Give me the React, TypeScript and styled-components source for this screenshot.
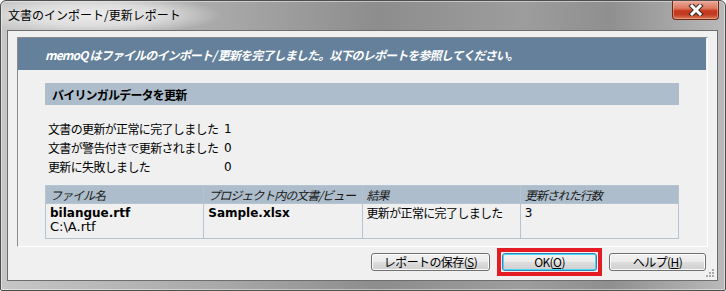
import {FC, Fragment} from 'react';
import styled, {createGlobalStyle} from 'styled-components';

const GlobalStyle = createGlobalStyle`
  html, body {
    margin: 0;
    padding: 0;
    background: #ffffff;
  }
  body {
    font-family: "Noto Sans CJK JP", sans-serif;
    font-size: 12px;
    color: #000;
  }
`;

const JP = `"Noto Sans CJK JP", sans-serif`;
const LATIN = `"DejaVu Sans", "Noto Sans CJK JP", sans-serif`;

const stats = [
  {label: '文書の更新が正常に完了しました', value: '1'},
  {label: '文書が警告付きで更新されました', value: '0'},
  {label: '更新に失敗しました', value: '0'},
];

const columns = ['ファイル名', 'プロジェクト内の文書/ビュー', '結果', '更新された行数'];

const Window = styled.div`
  width: 726px;
  height: 291px;
  box-sizing: border-box;
  border: 1px solid #4e4e4e;
  border-radius: 6px 6px 2px 2px;
  background: linear-gradient(90deg, #c6c6c6 0%, #a9a9a9 30%, #8d8d8d 52%, #9d9d9d 72%, #8f8f8f 84%, #b9b9b9 100%);
  box-shadow: inset 0 0 0 1px rgba(255, 255, 255, 0.45);
  display: flex;
  flex-direction: column;
  overflow: hidden;
`;

const TitleBar = styled.div`
  height: 29px;
  flex: none;
  display: flex;
  align-items: flex-start;
  justify-content: space-between;
  background: radial-gradient(ellipse 125px 20px at 95px 14px, rgba(240, 240, 240, 0.95) 0%, rgba(235, 235, 235, 0.7) 55%, rgba(220, 220, 220, 0) 100%);
`;

const TitleText = styled.span`
  font-family: ${JP};
  font-size: 12px;
  line-height: 14px;
  margin: 7px 0 0 7px;
  color: #000;
`;

const CloseButton = styled.div`
  width: 45px;
  height: 18px;
  margin-right: 6px;
  border: 1px solid #6a2b1d;
  border-top: none;
  border-radius: 0 0 4px 4px;
  background: linear-gradient(180deg, #e9a797 0%, #dc7a62 40%, #c6371c 55%, #c23c22 75%, #d97a55 100%);
  box-shadow: inset 0 0 0 1px rgba(255, 200, 180, 0.45);
  display: flex;
  align-items: center;
  justify-content: center;
`;

const Client = styled.div`
  position: relative;
  flex: 1;
  min-height: 0;
  margin: 0 7px 9px 6px;
  border: 1px solid #6d6d6d;
  background: #f0f0f0;
  padding: 6px 9px 9px 9px;
  display: flex;
  flex-direction: column;
  gap: 6px;
`;

const ReportPanel = styled.div`
  height: 210px;
  box-sizing: border-box;
  border: 1px solid;
  border-color: #8c8c8c #ffffff #ffffff #8c8c8c;
  background: #f0f0f0;
  display: flex;
  flex-direction: column;
`;

const Banner = styled.div`
  height: 32px;
  flex: none;
  margin-right: 1px;
  background: #64809a;
  color: #ffffff;
  font-family: ${JP};
  font-size: 12px;
  font-weight: bold;
  font-style: italic;
  letter-spacing: -0.85px;
  display: flex;
  align-items: center;
  padding-left: 27px;
  white-space: nowrap;
`;

const PanelBody = styled.div`
  padding: 13px 28px 0 27px;
  display: flex;
  flex-direction: column;
`;

const SectionBar = styled.div`
  height: 22px;
  background: #adbdcb;
  font-family: ${JP};
  font-size: 12px;
  font-weight: bold;
  letter-spacing: -0.8px;
  display: flex;
  align-items: center;
  padding-left: 7px;
`;

const StatsGrid = styled.div`
  margin-top: 14px;
  display: grid;
  grid-template-columns: 176px auto;
  grid-auto-rows: 19px;
  align-items: center;
  padding-left: 3px;
`;

const StatLabel = styled.span`
  font-family: ${JP};
  font-size: 12px;
  letter-spacing: -0.65px;
  white-space: nowrap;
`;

const StatValue = styled.span`
  font-family: ${LATIN};
  font-size: 12px;
`;

const ResultTable = styled.table`
  margin-top: 9px;
  width: 100%;
  border-collapse: collapse;
  table-layout: fixed;
`;

const HeadCell = styled.th`
  height: 17px;
  padding: 0 4px;
  background: #adbdcb;
  border: 1px solid #b6c4d2;
  text-align: left;
  font-family: ${JP};
  font-size: 12px;
  line-height: 14px;
  font-weight: normal;
  font-style: italic;
  letter-spacing: -1px;
  color: #1a1a1a;
  white-space: nowrap;
  overflow: hidden;
`;

const Cell = styled.td`
  height: 32px;
  padding: 2px 4px 0 4px;
  border: 1px solid #b6c4d2;
  vertical-align: top;
  line-height: 14px;
  white-space: nowrap;
  overflow: hidden;
`;

const FileName = styled.div`
  font-family: ${LATIN};
  font-size: 12px;
  font-weight: bold;
`;

const FilePath = styled.div`
  font-family: ${LATIN};
  font-size: 13px;
`;

const CellText = styled.div<{$latin?: boolean}>`
  font-family: ${p => (p.$latin ? LATIN : JP)};
  font-size: 12px;
  letter-spacing: ${p => (p.$latin ? '0' : '-0.65px')};
`;

const ButtonRow = styled.div`
  display: flex;
  justify-content: flex-end;
  align-items: center;
  gap: 12px;
  padding-right: 2px;
`;

/* red annotation frame around the default button; negative margin keeps the row spacing */
const Highlight = styled.span`
  display: flex;
  margin: -5px;
  padding: 1px;
  border: 4px solid #e41b23;
`;

const DialogButton = styled.button<{$width: number; $primary?: boolean}>`
  width: ${p => p.$width}px;
  height: 18px;
  padding: 0;
  border: 1px solid ${p => (p.$primary ? '#3c7fb1' : '#707070')};
  border-radius: 3px;
  background: linear-gradient(180deg, #f2f2f2 0%, #ebebeb 48%, #dddddd 52%, #cfcfcf 100%);
  box-shadow: inset 0 0 0 1px ${p => (p.$primary ? '#48d6fb' : '#fbfbfb')};
  font-family: ${JP};
  font-size: 12px;
  line-height: 16px;
  letter-spacing: -0.6px;
  color: #000;
  u {
    text-decoration: underline;
  }
`;

const Grip = styled.svg`
  position: absolute;
  right: 2px;
  bottom: 2px;
`;

const CloseIcon: FC = () => (
  <svg width="16" height="12" viewBox="0 0 16 12">
    <path d="M4 2 L12 10 M12 2 L4 10" stroke="#3d2a26" strokeWidth="5" strokeLinecap="square"/>
    <path d="M4 2 L12 10 M12 2 L4 10" stroke="#ffffff" strokeWidth="3" strokeLinecap="square"/>
  </svg>
);

const ResizeGrip: FC = () => (
  <Grip width="10" height="10" viewBox="0 0 10 10">
    {[[7, 1], [4, 4], [7, 4], [1, 7], [4, 7], [7, 7]].map(([x, y], i) => (
      <rect key={i} x={x} y={y} width="2" height="2" fill="#a9a9a9"/>
    ))}
  </Grip>
);

const App: FC = () => {
  return (
    <>
      <GlobalStyle/>
      <Window>
        <TitleBar>
          <TitleText>文書のインポート/更新レポート</TitleText>
          <CloseButton><CloseIcon/></CloseButton>
        </TitleBar>
        <Client>
          <ReportPanel>
            <Banner>memoQ はファイルのインポート/ 更新を完了しました。以下のレポートを参照してください。</Banner>
            <PanelBody>
              <SectionBar>バイリンガルデータを更新</SectionBar>
              <StatsGrid>
                {stats.map((s) => (
                  <Fragment key={s.label}>
                    <StatLabel>{s.label}</StatLabel>
                    <StatValue>{s.value}</StatValue>
                  </Fragment>
                ))}
              </StatsGrid>
              <ResultTable>
                <thead>
                <tr>
                  {columns.map((c) => (
                    <HeadCell key={c}>{c}</HeadCell>
                  ))}
                </tr>
                </thead>
                <tbody>
                <tr>
                  <Cell>
                    <FileName>bilangue.rtf</FileName>
                    <FilePath>C:\A.rtf</FilePath>
                  </Cell>
                  <Cell><FileName>Sample.xlsx</FileName></Cell>
                  <Cell><CellText>更新が正常に完了しました</CellText></Cell>
                  <Cell><CellText $latin>3</CellText></Cell>
                </tr>
                </tbody>
              </ResultTable>
            </PanelBody>
          </ReportPanel>
          <ButtonRow>
            <DialogButton $width={119}>レポートの保存(<u>S</u>)</DialogButton>
            <Highlight>
              <DialogButton $width={95} $primary>OK(<u>O</u>)</DialogButton>
            </Highlight>
            <DialogButton $width={97}>ヘルプ(<u>H</u>)</DialogButton>
          </ButtonRow>
          <ResizeGrip/>
        </Client>
      </Window>
    </>
  );
};

export default App;
